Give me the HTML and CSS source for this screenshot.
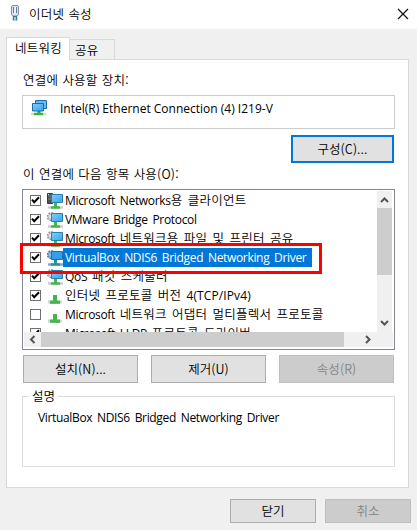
FILE: index.html
```
<!DOCTYPE html>
<html lang="ko">
<head>
<meta charset="utf-8">
<title>이더넷 속성</title>
<link rel="stylesheet" href="styles.css">
</head>
<body>
<svg class="defs" width="0" height="0">
  <defs>
    <linearGradient id="screen" x1="0" y1="0" x2="1" y2="1"><stop offset="0" stop-color="#7fd0fb"/><stop offset="1" stop-color="#35a3f0"/></linearGradient>
    <symbol id="plug" viewBox="0 0 16 16">
      <path d="M1 14h14" stroke="#d0d4d2" stroke-width="3"/>
      <path d="M3 14h10" stroke="#4bbd50" stroke-width="3"/><path d="M6 7h4v6h-4z" fill="#45b54b"/><path d="M3 15h10" stroke="#3d9f43"/>
    </symbol>
    <symbol id="monitor" viewBox="0 0 16 16">
      <path d="M1 14.500h15" stroke="#c8ccca" stroke-width="2.400"/>
      <path d="M4 14.500h9" stroke="#43b649" stroke-width="2.400"/><path d="M7 10h3v4h-3z" fill="#43b649"/>
      <path d="M4.500 1.500h11v8h-11z" fill="url(#screen)" stroke="#2b7fae"/>
    </symbol>
    <symbol id="gear" viewBox="0 0 16 16">
      <circle cx="4.300" cy="4.700" r="3.800" fill="#f3f5f6" stroke="#8d979e" stroke-width="1.600" stroke-dasharray="1.800 1.100"/>
      <circle cx="4.300" cy="4.700" r="2.800" fill="#e6eaed" stroke="#a9b2b8"/>
    </symbol>
    <symbol id="server" viewBox="0 0 16 16">
      <path d="M.5.5h5v10h-5z" fill="#4b5055" stroke="#34383c"/><path d="M1 3h4M1 6h4" stroke="#858b90"/><path d="M1 1.500h1" stroke="#d8dde0"/>
    </symbol>
    <symbol id="monitor-selected" viewBox="0 0 16 16">
      <path d="M1 14.500h15" stroke="#6fa8d8" stroke-width="2.400"/>
      <path d="M4 14.500h9" stroke="#2a8fa0" stroke-width="2.400"/><path d="M7 10h3v4h-3z" fill="#2a8fa0"/>
      <path d="M4.500 1.500h11v8h-11z" fill="#369ee8" stroke="#1a70b4"/>
    </symbol>
    <symbol id="gear-selected" viewBox="0 0 16 16">
      <circle cx="4.300" cy="4.700" r="3.800" fill="#8fc0e8" stroke="#3f83bb" stroke-width="1.600" stroke-dasharray="1.800 1.100"/>
      <circle cx="4.300" cy="4.700" r="2.800" fill="#8fc0e8" stroke="#5c9bcf"/>
    </symbol>
    <symbol id="check" viewBox="0 0 11 11"><path d="M2 4.700 4.200 7.200 9 2.300" fill="none" stroke="#000" stroke-width="2"/></symbol>
  </defs>
</svg>
<div class="dialog">
  <header class="titlebar">
    <svg class="app-icon" viewBox="0 0 10 17"><path d="M1.500 2q0-1.500 1.500-1.500h4q1.500 0 1.500 1.500v7l-1 2h-5l-1-2z" fill="#dce4ed" stroke="#8090a5"/><path d="M3.500 2v6M6.500 2v6" stroke="#69798d"/><path d="M5 2v6" stroke="#fff"/><path d="M3 11.500h4" stroke="#5a6c80"/><path d="M3.500 12v3.500M6.500 12v3.500" stroke="#1689ba" stroke-width="1.500"/><path d="M5 12v4" stroke="#65bde0"/></svg>
    <h1 class="k">이더넷 속성</h1>
    <svg class="close" viewBox="0 0 12 12"><path d="M1 1l10 10M11 1L1 11" stroke="#111" stroke-width="1.200"/></svg>
  </header>
  <nav class="tabs">
    <div class="tab active k">네트워킹</div>
    <div class="tab k">공유</div>
  </nav>
  <main class="panel">
    <p class="label k">연결에 사용할 장치:</p>
    <div class="device">
      <svg class="device-icon" viewBox="0 0 17 16"><path d="M0 14h15" stroke="#d2d5d3" stroke-width="2.400"/><path d="M3 14h9" stroke="#3eb344" stroke-width="2.400"/><path d="M6.500 11h3v3h-3z" fill="#38a53e"/><path d="M4.500.5h11v8h-11z" fill="#62bdf4" stroke="#246c9f"/><path d="M1.500 3.500h11v7.500h-11z" fill="url(#screen)" stroke="#246c9f"/></svg>
      <span>Intel(R) Ethernet Connection (4) I219-V</span>
    </div>
    <div class="configure"><button class="btn primary k">구성(C)...</button></div>
    <p class="label items-label k">이 연결에 다음 항목 사용(O):</p>
    <section class="listbox">
      <div class="list-main">
        <ul class="list">
          <li><i class="box"><svg><use href="#check"/></svg></i><svg class="ico"><use href="#server"/><use href="#monitor"/></svg><span class="name">Microsoft Networks<span class="k">용 클라이언트</span></span></li>
          <li><i class="box"><svg><use href="#check"/></svg></i><svg class="ico"><use href="#gear"/><use href="#monitor"/></svg><span class="name">VMware Bridge Protocol</span></li>
          <li><i class="box"><svg><use href="#check"/></svg></i><svg class="ico"><use href="#gear"/><use href="#monitor"/></svg><span class="name">Microsoft <span class="k">네트워크용 파일 및 프린터 공유</span></span></li>
          <li class="selected"><i class="box"><svg><use href="#check"/></svg></i><svg class="ico"><use href="#gear-selected"/><use href="#monitor-selected"/></svg><span class="name">VirtualBox NDIS6 Bridged Networking Driver</span></li>
          <li><i class="box"><svg><use href="#check"/></svg></i><svg class="ico"><use href="#gear"/><use href="#monitor"/></svg><span class="name">QoS <span class="k">패킷 스케줄러</span></span></li>
          <li><i class="box"><svg><use href="#check"/></svg></i><svg class="ico"><use href="#plug"/></svg><span class="name"><span class="k">인터넷 프로토콜 버전 </span><span class="version">4(TCP/IPv4)</span></span></li>
          <li><i class="box"></i><svg class="ico"><use href="#plug"/></svg><span class="name">Microsoft <span class="k">네트워크 어댑터 멀티플렉서 프로토콜</span></span></li>
          <li><i class="box"><svg><use href="#check"/></svg></i><svg class="ico"><use href="#plug"/></svg><span class="name">Microsoft LLDP <span class="k">프로토콜 드라이버</span></span></li>
        </ul>
        <div class="vbar">
          <svg class="arrow" viewBox="0 0 15 17"><path d="M4 11l3.500-3.500L11 11" /></svg>
          <div class="vthumb"></div>
          <svg class="arrow" viewBox="0 0 15 17"><path d="M4 6l3.500 3.500L11 6" /></svg>
        </div>
      </div>
      <div class="hbar">
        <svg class="arrow" viewBox="0 0 17 15"><path d="M10.500 4L7 7.500l3.500 3.500" /></svg>
        <div class="hthumb"></div>
        <svg class="arrow" viewBox="0 0 17 15"><path d="M6 4l3.500 3.500L6 11" /></svg>
      </div>
      <div class="marker"></div>
    </section>
    <div class="actions">
      <button class="btn k">설치(N)...</button>
      <button class="btn k">제거(U)</button>
      <button class="btn k" disabled>속성(R)</button>
    </div>
    <fieldset class="group">
      <legend class="k">설명</legend>
      <p class="desc">VirtualBox NDIS6 Bridged Networking Driver</p>
    </fieldset>
  </main>
  <footer class="footer">
    <button class="btn k">닫기</button>
    <button class="btn k" disabled>취소</button>
  </footer>
</div>
</body>
</html>
```
FILE: styles.css
```
* { box-sizing: border-box; }
body { margin: 0; font: 12px/18px "Open Sans", "Noto Sans CJK KR", sans-serif; color: #000; }
h1, p, ul { margin: 0; padding: 0; }
svg { display: block; }
.defs { position: absolute; }
.k { font-family: "Noto Sans CJK KR", sans-serif; font-size: 12.5px; letter-spacing: .22px; word-spacing: .5px; font-weight: 350; }
.dialog { width: 417px; height: 530px; background: #f0f0f0; display: flex; flex-direction: column; overflow: hidden; }
.titlebar { height: 29px; background: #fff; display: flex; align-items: center; padding: 0 8px 2px 10px; flex: none; }
.titlebar h1 { flex: 1; margin-left: 9px; line-height: 18px; }
.app-icon { width: 10px; height: 17px; }
.close { width: 12px; height: 12px; }
.tabs { height: 31px; padding: 8px 0 0 6px; display: flex; align-items: flex-end; flex: none; position: relative; z-index: 1; }
.tab { width: 45px; height: 21px; border: 1px solid #d9d9d9; border-left: 0; padding-left: 5px; line-height: 19px; }
.tab.active { width: 64px; height: 23px; border-left: 1px solid #d9d9d9; border-bottom: 0; background: #fff; padding-left: 8px; line-height: 19px; }
.panel { width: 403px; height: 429px; margin: -1px 0 0 6px; border: 1px solid #d9d9d9; background: #fff; padding: 11px 13px 0 15px; flex: none; }
.label { padding-left: 1px; height: 18px; line-height: 18px; white-space: nowrap; }
.device { height: 34px; margin-top: 6px; border: 1px solid #ccc; display: flex; padding: 4px 0 0 8px; }
.device-icon { width: 17px; height: 16px; margin: 0 12px 0 0; }
.configure { display: flex; justify-content: flex-end; margin: 6px 1px 0 0; }
.btn { width: 115px; height: 28px; border: 1px solid #adadad; background: #e1e1e1; color: #000; padding: 0; line-height: 24px; text-align: center; letter-spacing: .1px; }
.btn.primary { width: 103px; border: 2px solid #0078d7; line-height: 22px; }
.btn:disabled { background: #ccc; border-color: #bfbfbf; color: #838383; }
.items-label { margin-top: 2px; }
.listbox { position: relative; margin-top: 6px; height: 161px; border: 1px solid #828790; padding: 1px; }
.list-main { height: 141px; display: flex; }
.list { flex: 1; height: 141px; overflow: hidden; list-style: none; padding-left: 6px; }
.list li { height: 19px; display: flex; align-items: center; white-space: nowrap; }
.box { width: 11px; height: 11px; border: 1px solid #707070; background: #fff; margin-right: 6px; flex: none; }
.box svg { width: 11px; height: 11px; margin: -1px; }
.ico { width: 16px; height: 16px; flex: none; }
.name { height: 19px; line-height: 20px; padding: 0 6px 0 2px; letter-spacing: -.33px; word-spacing: 2px; }
.name .k { line-height: 18px; letter-spacing: .25px; word-spacing: 1.500px; }
.version { letter-spacing: .1px; }
.selected .name { background: #0078d7; color: #fff; }
.vbar { width: 15px; background: #f0f0f0; margin-right: 1px; }
.arrow { fill: none; stroke: #555; stroke-width: 2; }
.vbar .arrow { width: 15px; height: 17px; }
.vthumb { height: 67px; background: #cdcdcd; margin-bottom: 40px; }
.hbar { height: 15px; display: flex; background: #f0f0f0; }
.hbar .arrow { width: 17px; height: 15px; }
.hthumb { width: 303px; background: #cdcdcd; margin-right: 16px; }
.marker { position: absolute; left: -3px; top: 53px; width: 302px; height: 31px; border: 3px solid #f00; }
.actions { display: flex; gap: 13px; margin: 5px 0 0 1px; }
.group { margin: 4px 0 0; height: 80px; border: 1px solid #dcdcdc; padding: 0 0 0 15px; min-width: 0; }
.group legend { margin-left: -9px; padding: 0 3px; line-height: 18px; height: 18px; letter-spacing: 0; }
.desc { margin-top: 4px; letter-spacing: -.34px; word-spacing: 2px; }
.footer { display: flex; gap: 9px; padding: 11px 0 0 230px; }
.footer .btn { width: 86px; height: 24px; line-height: 20px; }
```
